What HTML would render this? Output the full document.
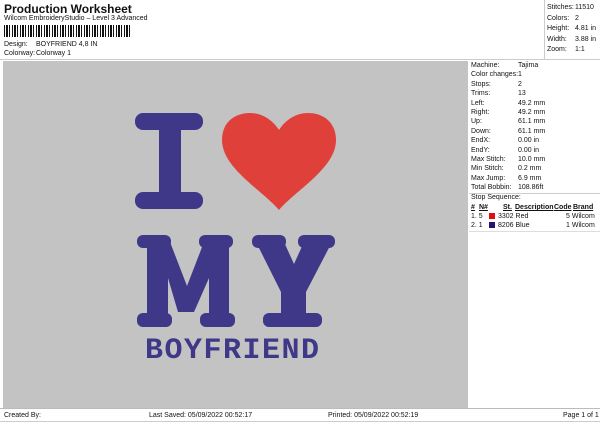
<!DOCTYPE html>
<html><head><meta charset="utf-8"><style>
*{margin:0;padding:0;box-sizing:border-box}
body{width:600px;height:424px;background:#fff;font-family:"Liberation Sans",sans-serif;color:#111;position:relative;overflow:hidden;font-size:7px}
.a{position:absolute;white-space:nowrap}
</style></head><body>
<div class="a" style="left:4px;top:2px;font-size:12px;font-weight:bold">Production Worksheet</div>
<div class="a" style="left:4px;top:15px;font-size:7px">Wilcom EmbroideryStudio – Level 3 Advanced</div>
<div class="a" style="left:4px;top:25px;width:126px;height:12px;background:repeating-linear-gradient(90deg,#111 0 1px,#fff 1px 2px,#111 2px 4px,#fff 4px 5px,#111 5px 6px,#fff 6px 8px)"></div>
<div class="a" style="left:4px;top:41px">Design:</div><div class="a" style="left:36px;top:41px">BOYFRIEND 4,8 IN</div>
<div class="a" style="left:4px;top:50px">Colorway:</div><div class="a" style="left:36px;top:50px">Colorway 1</div>
<div class="a" style="left:544px;top:0;width:1px;height:59px;background:#ccc"></div>
<div class="a" style="left:0;top:59px;width:600px;height:1px;background:#ccc"></div>
<div class="a" style="left:547px;top:3px;line-height:10.5px">Stitches:<br>Colors:<br>Height:<br>Width:<br>Zoom:</div>
<div class="a" style="left:575px;top:3px;line-height:10.5px">11510<br>2<br>4.81 in<br>3.88 in<br>1:1</div>
<div class="a" style="left:3px;top:61px;width:465px;height:347px;background:#c3c3c3"></div>
<svg class="a" style="left:0;top:0" width="468" height="408">
<g fill="#3f3788">
<rect x="135" y="113" width="68" height="17" rx="8"/>
<rect x="159" y="125" width="22" height="70"/>
<rect x="135" y="192" width="68" height="17" rx="8"/>
<path d="M147 242 H170 L187 286 L204 242 H229 V318 H209 V278 L194 312 H178 L168 278 V318 H147Z"/>
<rect x="137" y="235" width="34" height="13" rx="6"/>
<rect x="199" y="235" width="34" height="13" rx="6"/>
<rect x="137" y="313" width="35" height="14" rx="6"/>
<rect x="200" y="313" width="35" height="14" rx="6"/>
<path d="M256 242 H284 L294 264 L304 242 H332 L306 292 V318 H281 V292Z"/>
<rect x="252" y="235" width="34" height="13" rx="6"/>
<rect x="298" y="235" width="37" height="13" rx="6"/>
<rect x="263" y="313" width="59" height="14" rx="6"/>
</g>
<path d="M279 210 C262 190 222 168 222 140 C222 122 235 113 250 113 C264 113 274 122 279 130 C284 122 294 113 308 113 C324 113 336 123 336 140 C336 168 296 190 279 210Z" fill="#e0403a"/>
<text x="145" y="358" font-family="Liberation Mono,monospace" font-size="30" font-weight="bold" letter-spacing="1.5" fill="#3f3788">BOYFRIEND</text>
</svg>
<div class="a" style="left:471px;top:61px;line-height:9.4px">Machine:<br>Color changes:<br>Stops:<br>Trims:<br>Left:<br>Right:<br>Up:<br>Down:<br>EndX:<br>EndY:<br>Max Stitch:<br>Min Stitch:<br>Max Jump:<br>Total Bobbin:</div>
<div class="a" style="left:518px;top:61px;line-height:9.4px">Tajima<br>1<br>2<br>13<br>49.2 mm<br>49.2 mm<br>61.1 mm<br>61.1 mm<br>0.00 in<br>0.00 in<br>10.0 mm<br>0.2 mm<br>6.9 mm<br>108.86ft</div>
<div class="a" style="left:469px;top:193px;width:131px;height:1px;background:#ccc"></div>
<div class="a" style="left:471px;top:194px">Stop Sequence:</div>
<div class="a" style="left:471px;top:204px;font-weight:bold;text-decoration:underline">#</div>
<div class="a" style="left:479px;top:204px;font-weight:bold;text-decoration:underline">N#</div>
<div class="a" style="left:503px;top:204px;font-weight:bold;text-decoration:underline">St.</div>
<div class="a" style="left:515px;top:204px;font-weight:bold;text-decoration:underline">Description</div>
<div class="a" style="left:554px;top:204px;font-weight:bold;text-decoration:underline">Code</div>
<div class="a" style="left:573px;top:204px;font-weight:bold;text-decoration:underline">Brand</div>
<div class="a" style="left:471px;top:213px">1. 5</div><div class="a" style="left:489px;top:213px;width:6px;height:6px;background:#e01010"></div><div class="a" style="left:498px;top:213px">3302 Red</div><div class="a" style="left:566px;top:213px">5 Wilcom</div>
<div class="a" style="left:471px;top:222px">2. 1</div><div class="a" style="left:489px;top:222px;width:6px;height:6px;background:#201870"></div><div class="a" style="left:498px;top:222px">8206 Blue</div><div class="a" style="left:566px;top:222px">1 Wilcom</div>
<div class="a" style="left:469px;top:231px;width:131px;height:1px;background:#ddd"></div>
<div class="a" style="left:0;top:408px;width:600px;height:1px;background:#bbb"></div>
<div class="a" style="left:4px;top:412px">Created By:</div>
<div class="a" style="left:149px;top:412px">Last Saved: 05/09/2022 00:52:17</div>
<div class="a" style="left:328px;top:412px">Printed: 05/09/2022 00:52:19</div>
<div class="a" style="left:563px;top:412px">Page 1 of 1</div>
<div class="a" style="left:0;top:421px;width:600px;height:1px;background:#ccc"></div>
</body></html>
